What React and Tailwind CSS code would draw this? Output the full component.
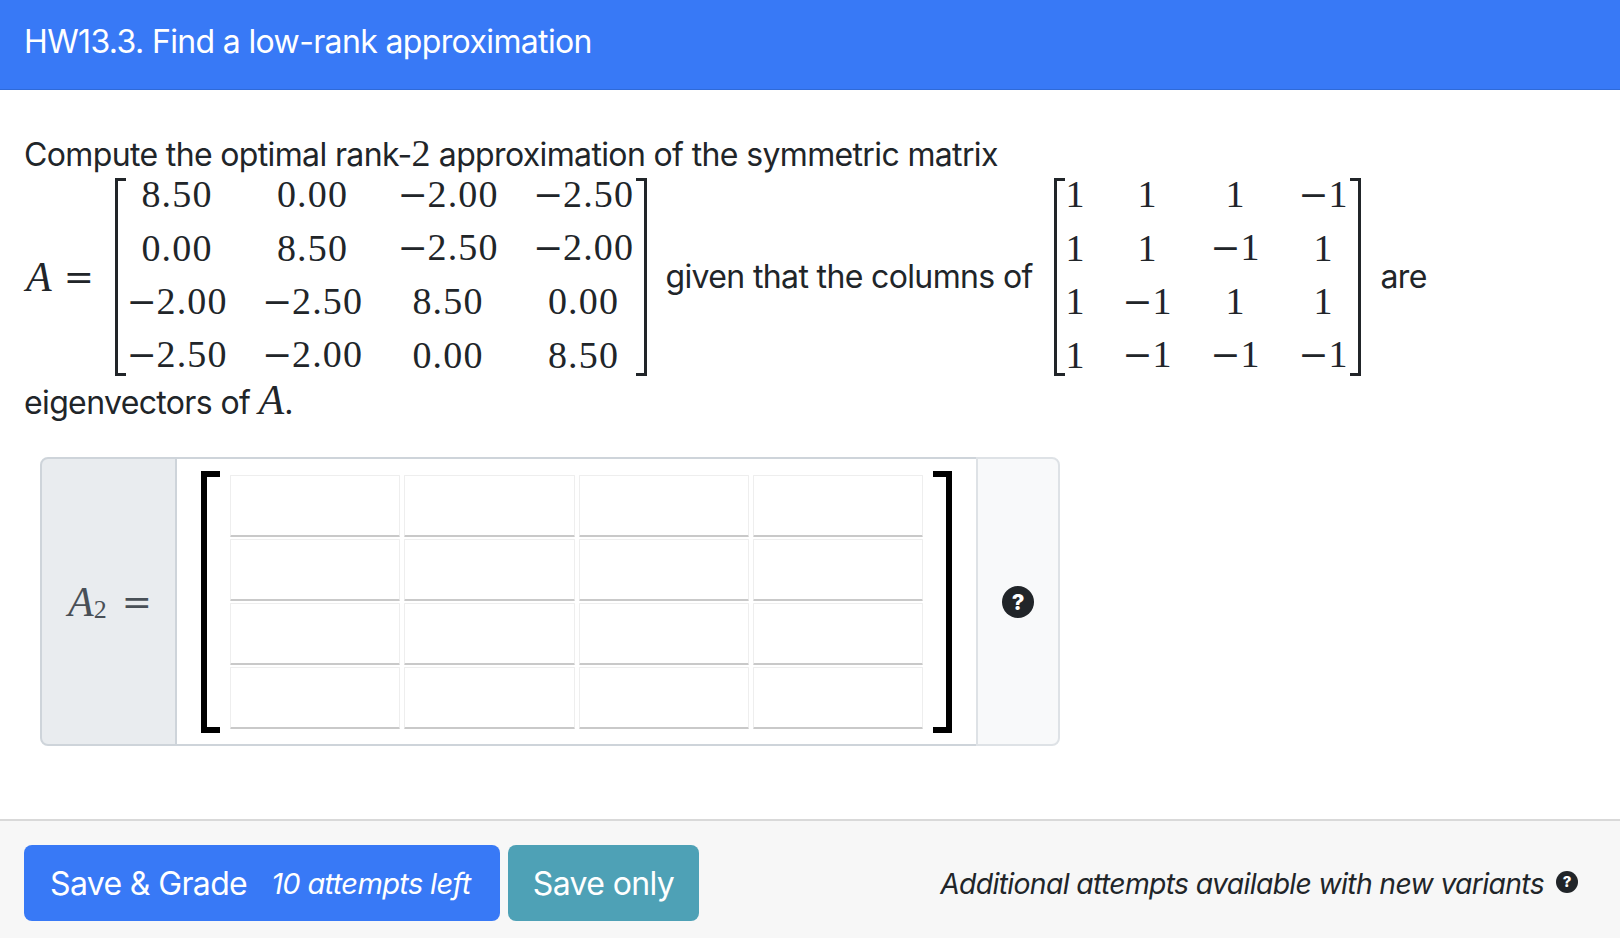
const matrixA = [
  ["8.50", "0.00", "-2.00", "-2.50"],
  ["0.00", "8.50", "-2.50", "-2.00"],
  ["-2.00", "-2.50", "8.50", "0.00"],
  ["-2.50", "-2.00", "0.00", "8.50"],
];

const matrixV = [
  ["1", "1", "1", "-1"],
  ["1", "1", "-1", "1"],
  ["1", "-1", "1", "1"],
  ["1", "-1", "-1", "-1"],
];

function Num({ value }) {
  const negative = value.startsWith("-");
  return (
    <span className="whitespace-nowrap">
      {negative && <span className="font-['DejaVu_Serif'] text-[36px] font-extralight tracking-normal">−</span>}
      {negative ? value.slice(1) : value}
    </span>
  );
}

function TexMatrix({ rows, gridClass }) {
  return (
    <div className="flex h-[198px] items-center">
      <div className="h-full w-[11px] shrink-0 border-y-[3px] border-l-[3px] border-[#212529]" />
      <div className={`-mt-[5px] grid auto-rows-[53.6px] items-center justify-items-center font-['Liberation_Serif',serif] text-[38px] tracking-[0.03em] ${gridClass}`}>
        {rows.flat().map((value, i) => (
          <Num key={i} value={value} />
        ))}
      </div>
      <div className="h-full w-[11px] shrink-0 border-y-[3px] border-r-[3px] border-[#212529]" />
    </div>
  );
}

function Help({ className }) {
  return (
    <span className={`flex shrink-0 items-center justify-center rounded-full bg-[#212529] font-extrabold tracking-normal text-white ${className}`}>
      ?
    </span>
  );
}

export default function App() {
  const cells = Array.from({ length: 16 });

  return (
    <div className="flex h-[938px] flex-col overflow-hidden bg-white font-['Inter',sans-serif] text-[32px] leading-[48px] tracking-[-0.02em] text-[#212529]">
      <header className="flex h-[90px] shrink-0 items-center border-b border-[#2f6ad8] bg-[#3879f6] px-6 pb-[6px] text-white">
        HW13.3. Find a low-rank approximation
      </header>

      <main className="flex-1 px-6 pt-[39px]">
        <p>
          Compute the optimal rank-<span className="font-['Liberation_Serif',serif] text-[38px] tracking-normal">2</span> approximation of the symmetric matrix
        </p>

        <div className="-mt-px flex h-[198px] items-center">
          <span className="flex w-[91px] shrink-0 items-center pl-[2px] font-['Liberation_Serif',serif] text-[42px] tracking-normal">
            <i>A</i>
            <span className="ml-[12px] font-['DejaVu_Serif'] text-[36px] font-extralight">=</span>
          </span>
          <TexMatrix rows={matrixA} gridClass="ml-[3px] mr-[4px] grid-cols-[repeat(4,96px)] gap-x-[39.5px]" />
          <span className="ml-[19px] w-[388px] shrink-0">given that the columns of</span>
          <TexMatrix rows={matrixV} gridClass="ml-[3px] mr-[2px] grid-cols-[16px_48px_48px_48px] gap-x-[40px]" />
          <span className="ml-[20px]">are</span>
        </div>

        <p>
          eigenvectors of <i className="font-['Liberation_Serif',serif] text-[42px] tracking-normal">A</i>.
        </p>

        <div className="ml-4 mt-[30px] flex h-[289px] w-[1020px]">
          <div className="flex w-[137px] shrink-0 items-center justify-center rounded-l-lg border-2 border-[#ced4da] bg-[#e9ecef] pl-[3px] font-['Liberation_Serif',serif] text-[42px] tracking-normal text-[#495057]">
            <span className="flex items-center">
              <i>A</i>
              <span className="mt-[16px] text-[26px]">2</span>
              <span className="ml-[15px] font-['DejaVu_Serif'] text-[36px] font-extralight">=</span>
            </span>
          </div>

          <div className="flex flex-1 items-center border-y-2 border-[#ced4da] bg-white pl-[24px]">
            <div className="h-[262px] w-[19px] shrink-0 border-y-[6px] border-l-[6px] border-black" />
            <div className="ml-[10px] grid w-[693px] grid-cols-4 gap-x-[4px] gap-y-[2px]">
              {cells.map((_, i) => (
                <div key={i} className="h-[62px] rounded-[1px] border border-b-2 border-[#eeeeee] border-b-[#c9c9c9] bg-white" />
              ))}
            </div>
            <div className="ml-[10px] h-[262px] w-[19px] shrink-0 border-y-[6px] border-r-[6px] border-black" />
          </div>

          <div className="flex w-[84px] shrink-0 items-center justify-center rounded-r-lg border-2 border-[#dee2e6] bg-[#f8f9fa]">
            <Help className="h-8 w-8 text-[22px]" />
          </div>
        </div>
      </main>

      <footer className="flex h-[119px] shrink-0 items-center border-t-2 border-[#d9d9d9] bg-[#f7f7f7] px-6 pt-[7px]">
        <button className="flex h-[76px] w-[476px] items-center rounded-lg bg-[#3879f6] pl-[26px] pt-[2px] text-white">
          Save &amp; Grade
          <i className="ml-6 text-[29px]">10 attempts left</i>
        </button>
        <button className="ml-2 h-[76px] w-[191px] rounded-lg bg-[#4ea1b6] pt-[2px] text-white">Save only</button>
        <div className="ml-auto flex items-center pr-[18px] pt-[2px]">
          <i className="text-[28.3px]">Additional attempts available with new variants</i>
          <Help className="-mt-1 ml-3 h-[22px] w-[22px] text-[15px]" />
        </div>
      </footer>
    </div>
  );
}
